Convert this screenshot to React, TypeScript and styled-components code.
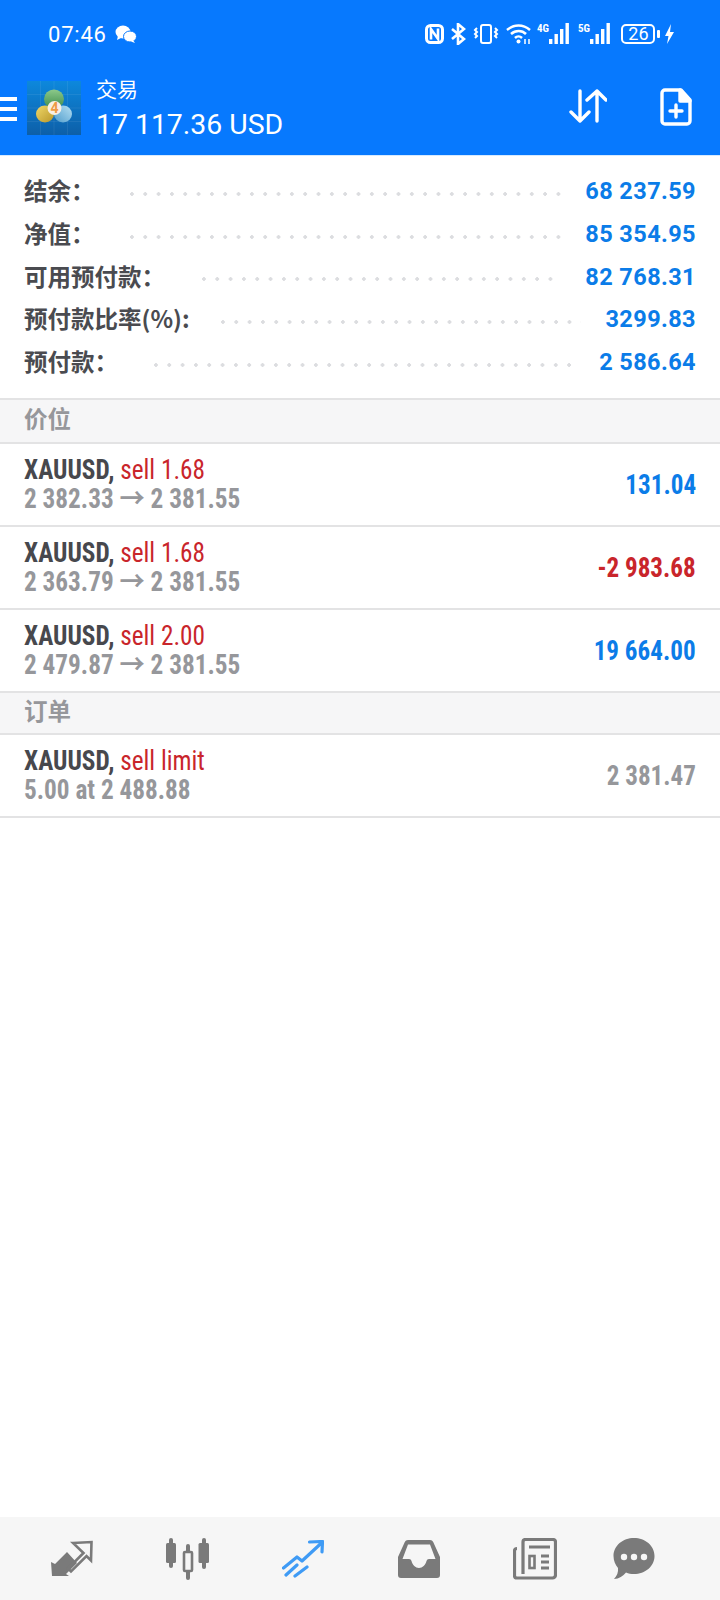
import React from "react";
import styled, { createGlobalStyle } from "styled-components";

const GlobalStyle = createGlobalStyle`
  html, body {
    margin: 0;
    padding: 0;
    background: #ffffff;
  }
`;

const Screen = styled.div`
  width: 720px;
  height: 1600px;
  display: flex;
  flex-direction: column;
  font-family: Roboto, "Noto Sans CJK SC", sans-serif;
  overflow: hidden;
`;

const Header = styled.header`
  height: 155px;
  background: #0779fe;
  border-bottom: 1px solid #d6eaff;
  color: #ffffff;
  display: flex;
  flex-direction: column;
`;

const StatusBar = styled.div`
  height: 68px;
  padding: 0 45px 0 48px;
  display: flex;
  align-items: center;
  justify-content: space-between;
`;

const StatusLeft = styled.div`
  display: flex;
  align-items: center;
  gap: 8px;
`;

const Clock = styled.span`
  font-size: 22px;
  letter-spacing: 0.8px;
`;

const StatusRight = styled.div`
  display: flex;
  align-items: center;
  gap: 6.6px;
`;

const BatteryBox = styled.div`
  width: 34px;
  height: 20px;
  box-sizing: border-box;
  border: 2px solid #ffffff;
  border-radius: 5px;
  font-size: 18px;
  line-height: 16px;
  text-align: center;
  margin-left: 3px;
`;

const BoltIcon = styled.svg`
  margin-left: -5px;
`;

const AppBar = styled.div`
  flex: 1;
  display: flex;
  align-items: flex-start;
`;

const Burger = styled.div`
  width: 17px;
  margin-top: 29px;
  display: flex;
  flex-direction: column;
  gap: 6px;
`;

const BurgerBar = styled.div`
  height: 4px;
  background: #ffffff;
`;

const Logo = styled.div`
  width: 54px;
  height: 54px;
  margin: 13px 0 0 10px;
  display: flex;
`;

const Titles = styled.div`
  margin: 8px 0 0 15px;
  flex: 1;
`;

const Title = styled.div`
  font-size: 21px;
  line-height: 29px;
`;

const Balance = styled.div`
  font-size: 28.4px;
  line-height: 38px;
  margin-top: 1px;
`;

const AppAction = styled.div<{ $m: string }>`
  display: flex;
  margin: ${(p) => p.$m};
`;

const Summary = styled.section`
  padding: 14px 24px 14px 24px;
  display: flex;
  flex-direction: column;
  height: 244px;
  box-sizing: border-box;
  border-bottom: 2px solid #e3e3e4;
`;

const SummaryRow = styled.div`
  height: 42.7px;
  display: flex;
  align-items: center;
`;

const SummaryLabel = styled.span`
  font-size: 23.5px;
  font-weight: 700;
  color: #4a4b50;
  font-family: "Noto Sans CJK SC", sans-serif;
  margin-top: -2px;
`;

const Leader = styled.span<{ $left: number }>`
  flex: 1;
  height: 4px;
  margin: 5px 24px 0 ${(p) => p.$left}px;
  background-image: radial-gradient(circle at 2px 2px, #dcdde0 1.6px, transparent 1.7px);
  background-size: 13.33px 4px;
  background-repeat: repeat-x;
`;

const SummaryValue = styled.span`
  font-size: 23.5px;
  font-weight: 700;
  color: #0b7ce8;
  letter-spacing: 0.4px;
`;

const SectionTitle = styled.div<{ $h: number }>`
  height: ${(p) => p.$h}px;
  box-sizing: border-box;
  background: #f6f6f7;
  border-bottom: 2px solid #e3e3e4;
  padding: 0 0 6px 24px;
  display: flex;
  align-items: center;
  font-family: "Noto Sans CJK SC", sans-serif;
  font-size: 23.5px;
  font-weight: 700;
  color: #96979b;
`;

const TradeRow = styled.div`
  height: 83px;
  box-sizing: border-box;
  border-bottom: 2px solid #e3e3e4;
  padding: 9px 24px 0 24px;
  display: flex;
  align-items: center;
  justify-content: space-between;
`;

const TradeInfo = styled.div`
  font-stretch: 75%;
  font-size: 27px;
  line-height: 29px;
  margin-top: -8px;
  transform: scaleX(0.935);
  transform-origin: left center;
  white-space: nowrap;
`;

const Symbol = styled.span`
  font-weight: 700;
  color: #47484d;
`;

const Side = styled.span`
  color: #c9252b;
`;

const PriceLine = styled.div`
  font-weight: 700;
  color: #96979b;
`;

const Profit = styled.div<{ $tone: "blue" | "red" | "grey" }>`
  font-stretch: 75%;
  font-size: 27px;
  font-weight: 700;
  margin-top: -8px;
  transform: scaleX(0.93);
  transform-origin: right center;
  color: ${(p) => (p.$tone === "blue" ? "#0b7ce8" : p.$tone === "red" ? "#c9252b" : "#96979b")};
`;

const Spacer = styled.div`
  flex: 1;
`;

const TabBar = styled.nav`
  height: 83px;
  background: #f6f6f6;
  padding-left: 14px;
  display: grid;
  grid-template-columns: 116px 115px 116px 116px 115px 84px;
  align-items: center;
`;

const Tab = styled.div`
  display: flex;
  justify-content: center;
`;

const SignalLabel = styled.text`
  font-family: Roboto, sans-serif;
  font-size: 11px;
  font-weight: 700;
  font-stretch: 75%;
`;

const SignalIcon = ({ label }: { label: string }) => (
  <svg width="34" height="22" viewBox="0 0 34 22" fill="#fff">
    <SignalLabel x="0" y="9">
      {label}
    </SignalLabel>
    <rect x="12" y="16" width="3.400" height="5" />
    <rect x="17.500" y="11" width="3.400" height="10" />
    <rect x="23" y="6" width="3.400" height="15" />
    <rect x="28.500" y="0" width="3.400" height="21" />
  </svg>
);

const trades = [
  { side: "sell 1.68", line: "2 382.33 → 2 381.55", value: "131.04", tone: "blue" as const },
  { side: "sell 1.68", line: "2 363.79 → 2 381.55", value: "-2 983.68", tone: "red" as const },
  { side: "sell 2.00", line: "2 479.87 → 2 381.55", value: "19 664.00", tone: "blue" as const },
];

const summary = [
  { label: "结余：", left: 35, value: "68 237.59" },
  { label: "净值：", left: 35, value: "85 354.95" },
  { label: "可用预付款：", left: 37, value: "82 768.31" },
  { label: "预付款比率(%):", left: 31, value: "3299.83" },
  { label: "预付款：", left: 36, value: "2 586.64" },
];

const App = () => (
  <Screen>
    <GlobalStyle />
    <Header>
      <StatusBar>
        <StatusLeft>
          <Clock>07:46</Clock>
          <svg width="22" height="20" viewBox="0 0 22 20" fill="#fff">
            <ellipse cx="8" cy="8" rx="7.500" ry="6.500" />
            <path d="M3 12l-1 4 4-2z" />
            <ellipse cx="15" cy="12.500" rx="6.500" ry="5.500" stroke="#0779fe" strokeWidth="1" />
            <path d="M18 16l2 3-4-1.500z" />
          </svg>
        </StatusLeft>
        <StatusRight>
          <svg width="19" height="20" viewBox="0 0 19 20" fill="none" stroke="#fff">
            <rect x="1.500" y="1.500" width="16" height="17" rx="4" strokeWidth="3" />
            <path d="M6 15.500V5l7 10V4.500" strokeWidth="2.600" />
          </svg>
          <svg width="16" height="22" viewBox="0 0 16 22" fill="none" stroke="#fff" strokeWidth="2.600">
            <path d="M2 6l12 10-6 5V1l6 5L2 16" />
          </svg>
          <svg width="26" height="22" viewBox="0 0 26 22" fill="none" stroke="#fff" strokeWidth="2">
            <rect x="8" y="2" width="10" height="18" rx="2" />
            <path d="M4 5l-2 2 2 2-2 2 2 2-2 2M22 5l2 2-2 2 2 2-2 2 2 2" />
          </svg>
          <svg width="25" height="22" viewBox="0 0 25 22" fill="none" stroke="#fff" strokeWidth="2.500">
            <path d="M1 7c7-6 16-6 23 0M5 11c4.500-4 11-4 15 0M9 15c2-2 5-2 7 0" />
            <circle cx="12.500" cy="18.500" r="2" fill="#fff" stroke="none" />
            <path d="M19 16v5M23 16v5" strokeWidth="1.500" />
          </svg>
          <SignalIcon label="4G" />
          <SignalIcon label="5G" />
          <BatteryBox>26</BatteryBox>
          <BoltIcon width="18" height="20" viewBox="0 0 18 20" fill="#fff">
            <rect x="0" y="6" width="3" height="8" rx="1" />
            <path d="M14 0L8 12h3.500L10 20l7-12h-4z" />
          </BoltIcon>
        </StatusRight>
      </StatusBar>
      <AppBar>
        <Burger>
          <BurgerBar />
          <BurgerBar />
          <BurgerBar />
        </Burger>
        <Logo>
          <svg width="54" height="54" viewBox="0 0 54 54">
            <defs>
              <linearGradient id="logoBg" x1="0" y1="0" x2="0" y2="1">
                <stop offset="0" stopColor="#0d88dc" />
                <stop offset="1" stopColor="#0d5fa8" />
              </linearGradient>
              <linearGradient id="lobeGreen" x1="0" y1="0" x2="0" y2="1">
                <stop offset="0" stopColor="#8cc98a" />
                <stop offset="1" stopColor="#3f8c4c" />
              </linearGradient>
              <linearGradient id="lobeYellow" x1="0" y1="0" x2="1" y2="1">
                <stop offset="0" stopColor="#f0d868" />
                <stop offset="1" stopColor="#b8962a" />
              </linearGradient>
              <linearGradient id="lobeBlue" x1="1" y1="0" x2="0" y2="1">
                <stop offset="0" stopColor="#b5dff2" />
                <stop offset="1" stopColor="#4f9ccc" />
              </linearGradient>
            </defs>
            <rect width="54" height="54" fill="url(#logoBg)" />
            <path d="M0 13.500H54M0 27H54M0 40.500H54M13.500 0V54M27 0V54M40.500 0V54" stroke="#ffffff" strokeOpacity="0.07" />
            <ellipse cx="27" cy="18" rx="10" ry="9.500" fill="url(#lobeGreen)" />
            <ellipse cx="18" cy="33" rx="9" ry="8.500" fill="url(#lobeYellow)" />
            <ellipse cx="36" cy="33" rx="9" ry="8.500" fill="url(#lobeBlue)" />
            <circle cx="27.500" cy="27" r="7" fill="#f8efe4" />
            <text x="27.500" y="32" fontSize="14" fontWeight="700" textAnchor="middle" fill="#ee9a44" fontFamily="Roboto">4</text>
          </svg>
        </Logo>
        <Titles>
          <Title>交易</Title>
          <Balance>17 117.36 USD</Balance>
        </Titles>
        <AppAction $m="21px 53px 0 0">
          <svg width="38" height="34" viewBox="0 0 38 34" fill="none" stroke="#fff" strokeWidth="3.400" strokeLinecap="round" strokeLinejoin="round">
            <path d="M11 2v30M2 23l9 9 9-9M28 32V2M18 11l10-9 9 9" />
          </svg>
        </AppAction>
        <AppAction $m="20px 28px 0 0">
          <svg width="32" height="38" viewBox="0 0 32 38" fill="none" stroke="#fff" strokeWidth="3.400" strokeLinejoin="round" strokeLinecap="round">
            <path d="M5 2h16l9 10v21a3 3 0 0 1-3 3H5a3 3 0 0 1-3-3V5a3 3 0 0 1 3-3z" />
            <path d="M20 2v11h10z" fill="#fff" />
            <path d="M16 17v12M10 23h12" />
          </svg>
        </AppAction>
      </AppBar>
    </Header>

    <Summary>
      {summary.map((row) => (
        <SummaryRow key={row.label}>
          <SummaryLabel>{row.label}</SummaryLabel>
          <Leader $left={row.left} />
          <SummaryValue>{row.value}</SummaryValue>
        </SummaryRow>
      ))}
    </Summary>

    <SectionTitle $h={44}>价位</SectionTitle>
    {trades.map((t) => (
      <TradeRow key={t.line}>
        <TradeInfo>
          <div>
            <Symbol>XAUUSD, </Symbol>
            <Side>{t.side}</Side>
          </div>
          <PriceLine>{t.line}</PriceLine>
        </TradeInfo>
        <Profit $tone={t.tone}>{t.value}</Profit>
      </TradeRow>
    ))}
    <SectionTitle $h={42}>订单</SectionTitle>
    <TradeRow>
      <TradeInfo>
        <div>
          <Symbol>XAUUSD, </Symbol>
          <Side>sell limit</Side>
        </div>
        <PriceLine>5.00 at 2 488.88</PriceLine>
      </TradeInfo>
      <Profit $tone="grey">2 381.47</Profit>
    </TradeRow>

    <Spacer />

    <TabBar>
      <Tab>
        <svg width="42" height="38" viewBox="0 0 42 38" fill="none">
          <path d="M0 22l4 2 12-12 10 11-11 11 3 2H1z" fill="#7a7a7a" />
          <path d="M22 3L40.500 2 40 20.500 35.500 16 20 31.500 17 28.500 32.500 13z" stroke="#7a7a7a" strokeWidth="2.600" strokeLinejoin="miter" />
        </svg>
      </Tab>
      <Tab>
        <svg width="44" height="42" viewBox="0 0 44 42" fill="#7a7a7a">
          <rect x="0" y="5" width="10" height="20" rx="1.500" />
          <rect x="3" y="0" width="4" height="30" rx="2" />
          <rect x="32.500" y="5" width="10.500" height="20" rx="1.500" />
          <rect x="36" y="0" width="4" height="31" rx="2" />
          <rect x="20" y="6" width="4" height="36" rx="2" />
          <rect x="18" y="14" width="8" height="19" rx="1" fill="#f6f6f6" stroke="#7a7a7a" strokeWidth="2.600" />
        </svg>
      </Tab>
      <Tab>
        <svg width="42" height="38" viewBox="0 0 42 38" fill="none" stroke="#3f9bf5" strokeWidth="3.200" strokeLinecap="round" strokeLinejoin="round">
          <path d="M1.500 28L15 17l5 4L40 2.500M27.500 2L40.500 1.500 40 12" />
          <path d="M4 35l11-10M13 36l12-9" />
        </svg>
      </Tab>
      <Tab>
        <svg width="42" height="38" viewBox="0 0 42 38" fill="#7a7a7a">
          <path fillRule="evenodd" d="M10 0h22c1.500 0 2.600.8 3.200 2L42 17v18a3 3 0 0 1-3 3H3a3 3 0 0 1-3-3V17L6.800 2C7.400.8 8.500 0 10 0zm0 4.500L4.500 19H11c1.500 0 2 .8 2.500 2 1 4 4 7 7.500 7s6.500-3 7.500-7c.5-1.200 1-2 2.500-2h6.500L32 4.500z" />
        </svg>
      </Tab>
      <Tab>
        <svg width="44" height="42" viewBox="0 0 44 42" fill="none" stroke="#7a7a7a" strokeWidth="3.200">
          <path d="M10 36V4a2.500 2.500 0 0 1 2.500-2.500H40A2.500 2.500 0 0 1 42.500 4v33a3 3 0 0 1-3 3H4a2.500 2.500 0 0 1-2.500-2.500V13c0-1.500 1-2.500 2.500-2.500" />
          <path d="M16 9h21M28 18h8M28 24h8M28 30h8" />
          <rect x="16.500" y="18" width="5" height="12" strokeWidth="2.600" />
        </svg>
      </Tab>
      <Tab>
        <svg width="42" height="42" viewBox="0 0 42 42" fill="#7a7a7a">
          <path d="M21 0c11 0 20.500 7.500 20.500 18S32 36 21 36c-3 0-5.500-.5-8-1.500C10 38 6 41 1 41c3-3 4.500-7 4-11C2.500 27 .5 23 .5 18 .5 7.500 10 0 21 0z" />
          <circle cx="11" cy="19" r="3.200" fill="#f6f6f6" />
          <circle cx="21" cy="19" r="3.200" fill="#f6f6f6" />
          <circle cx="31" cy="19" r="3.200" fill="#f6f6f6" />
        </svg>
      </Tab>
    </TabBar>
  </Screen>
);

export default App;
